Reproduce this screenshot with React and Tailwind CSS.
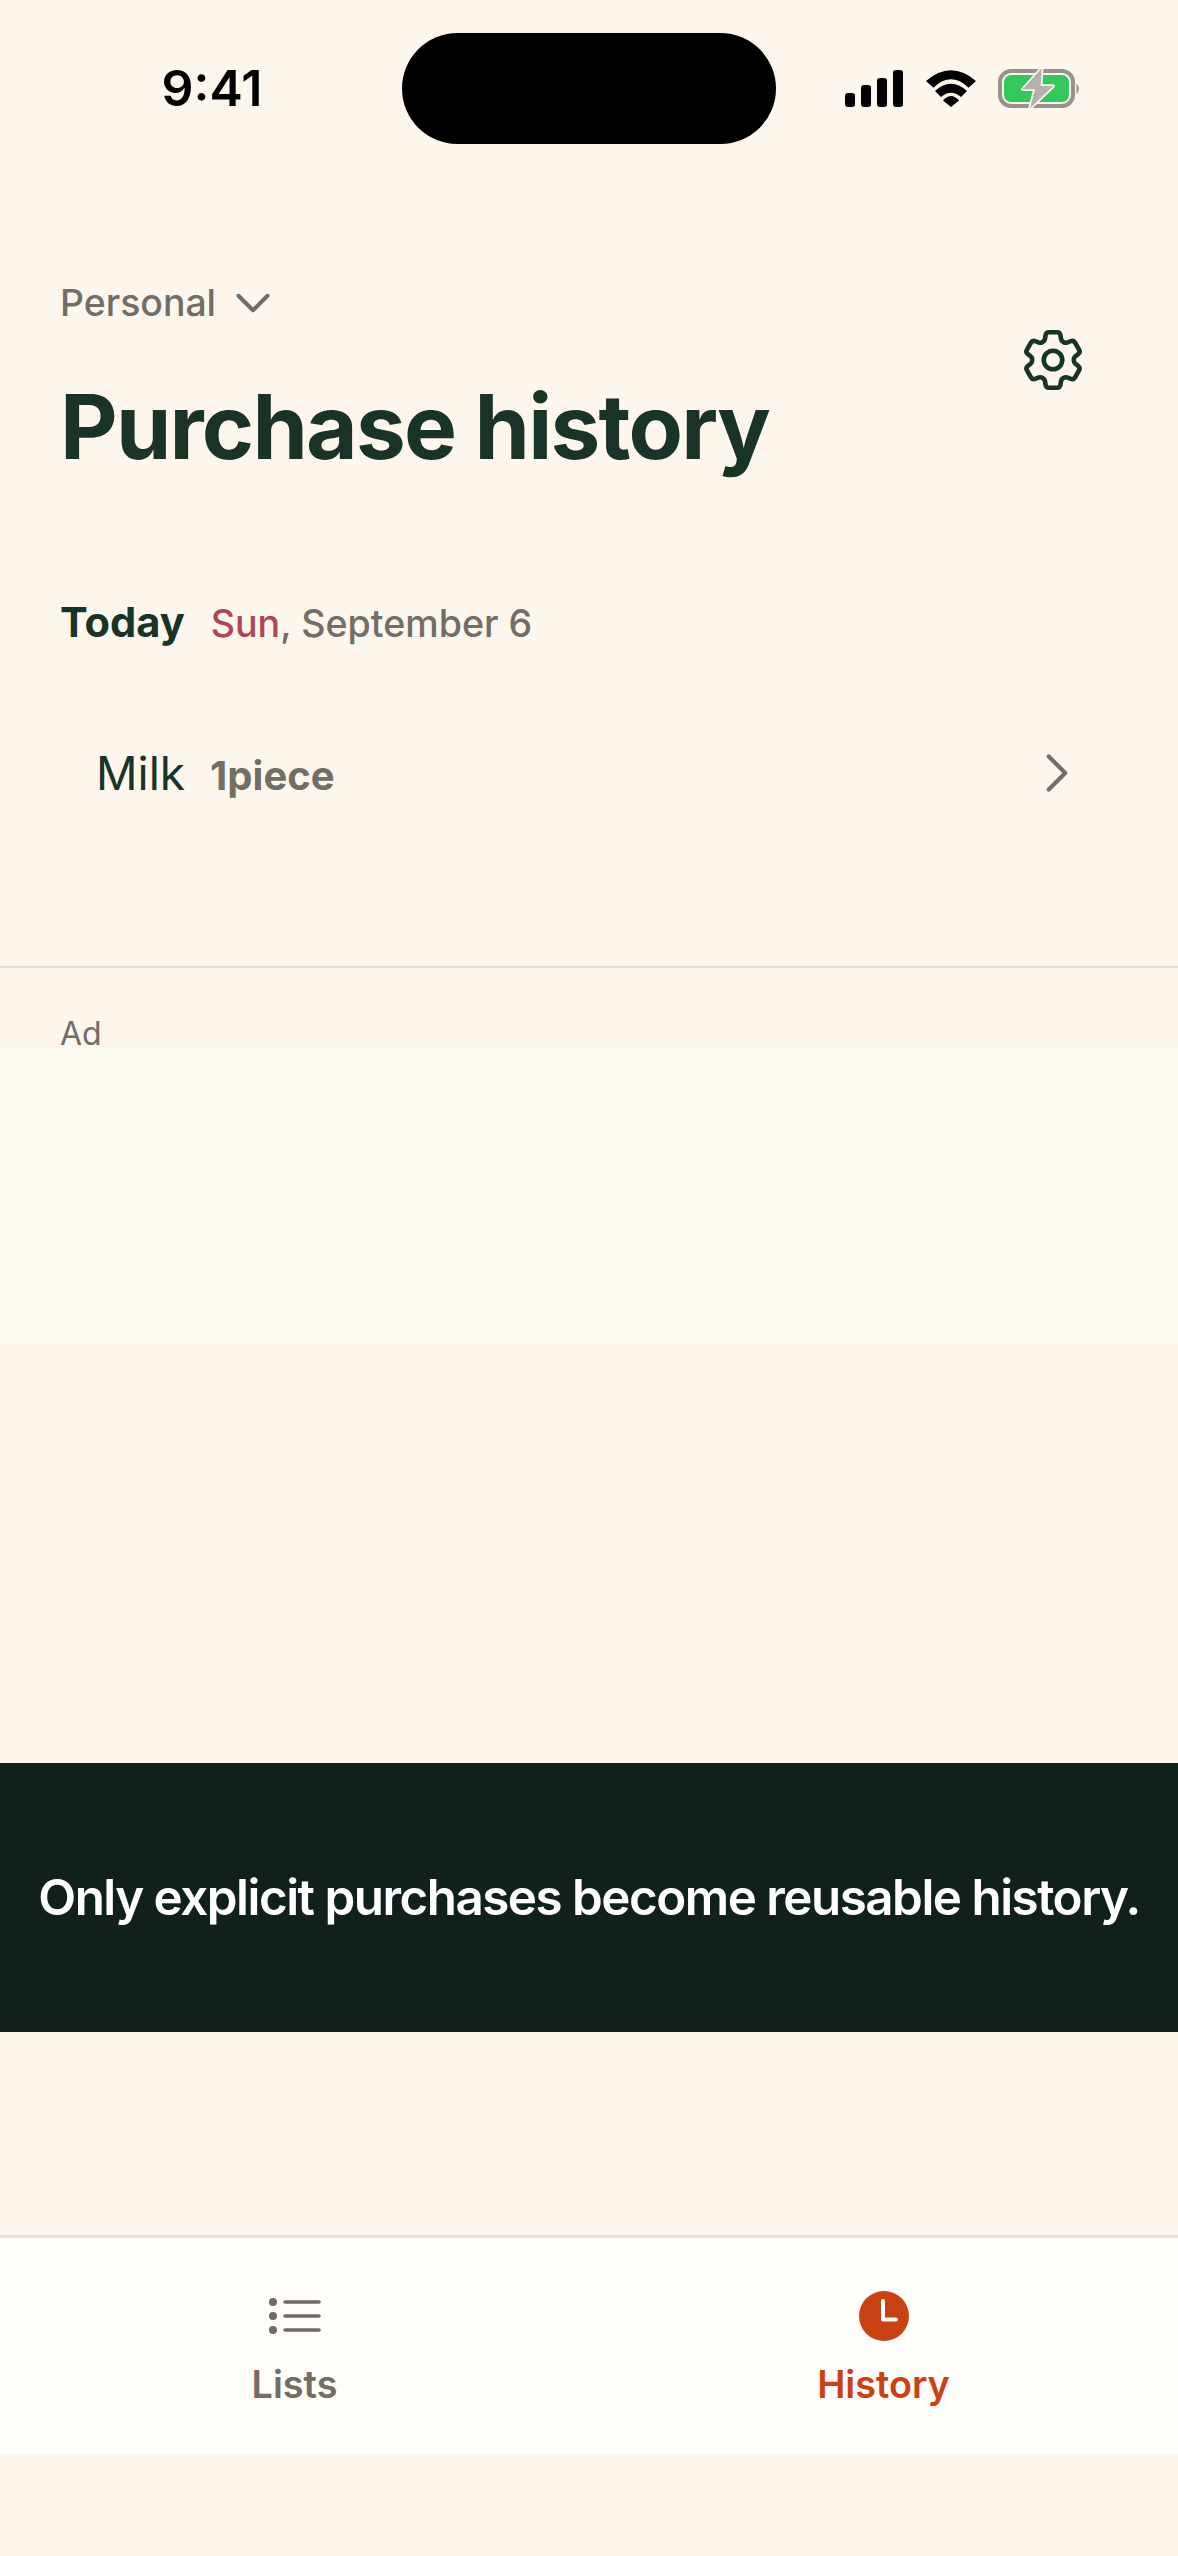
import React from 'react';
import { ChevronDown, ChevronRight } from 'lucide-react';
import { HiOutlineCog6Tooth } from 'react-icons/hi2';

const StatusIcons = () => (
  <svg width="240" height="40" viewBox="0 0 240 40" className="shrink-0 overflow-visible">
    {/* signal */}
    <rect x="0" y="24" width="10" height="14" rx="3" fill="#000" />
    <rect x="16" y="16" width="10" height="22" rx="3" fill="#000" />
    <rect x="32" y="9" width="10" height="29" rx="3" fill="#000" />
    <rect x="48" y="1" width="10" height="37" rx="3" fill="#000" />
    {/* wifi */}
    <path d="M81 12 Q106 -9.4 131 12 L123.5 18.7 Q106 1.9 88.5 18.7 Z" fill="#000" />
    <path d="M90 22 Q106 7.4 122 22 L116 28 Q106 19.4 96 28 Z" fill="#000" />
    <path d="M106 38 L98 31.5 Q106 22.5 114 31.5 Z" fill="#000" />
    {/* battery */}
    <rect x="155" y="2" width="73" height="35" rx="11" fill="none" stroke="#97938c" strokeWidth="4" />
    <rect x="159" y="6" width="65" height="27" rx="7" fill="#34c759" />
    <path d="M231.5 14 Q236 19.5 231.5 25.5 Z" fill="#97938c" />
    <path d="M196.7 -0.7 L177.7 20.3 H190 L185 39.3 L208.3 17 H195.7 Z" fill="#b5b1aa" stroke="#fdf6ed" strokeWidth="3.5" strokeLinejoin="round" paintOrder="stroke" />
  </svg>
);

const ListsIcon = () => (
  <svg width="52" height="36" viewBox="0 0 52 36">
    <circle cx="4" cy="4" r="4" fill="#6f6a63" />
    <circle cx="4" cy="18" r="4" fill="#6f6a63" />
    <circle cx="4" cy="32" r="4" fill="#6f6a63" />
    <path d="M16 4H50M16 18H50M16 32H50" stroke="#6f6a63" strokeWidth="3.5" strokeLinecap="round" />
  </svg>
);

const HistoryIcon = () => (
  <svg width="52" height="52" viewBox="0 0 52 52">
    <circle cx="26" cy="26" r="25" fill="#c84213" />
    <path d="M25 11V29.5H38" fill="none" stroke="#fff" strokeWidth="4" strokeLinecap="round" strokeLinejoin="round" />
  </svg>
);

const App = () => {
  return (
    <div className="w-[1178px] h-[2556px] flex flex-col bg-[#fdf6ed] font-['Inter',sans-serif] overflow-hidden">
      {/* Status bar */}
      <div className="h-[144px] pt-[33px] flex items-start shrink-0">
        <div className="w-[402px] h-[111px] flex items-center justify-center pl-[22px] text-[50px] font-semibold text-black">9:41</div>
        <div className="w-[374px] h-[111px] rounded-[56px] bg-black" />
        <div className="h-[111px] flex items-center pl-[69px]">
          <StatusIcons />
        </div>
      </div>

      {/* Header */}
      <div className="px-[60px] pt-[136px] relative h-[383px] shrink-0">
        <div className="h-[46px] flex items-center gap-[8px] text-[37.4px] font-medium text-[#726d65]">
          Personal
          <ChevronDown size={58} strokeWidth={1.65} />
        </div>
        <h1 className="mt-[51px] text-[89px] leading-[100px] font-bold text-[#193326] tracking-[-0.02em]">Purchase history</h1>
        <HiOutlineCog6Tooth size={74} className="absolute right-[88px] top-[179px] text-[#193326]" />
      </div>

      {/* Day */}
      <div className="px-[60px] pt-[70px] flex items-baseline gap-[26px] shrink-0">
        <span className="text-[41.6px] leading-[50px] font-bold text-[#193326]">Today</span>
        <span className="text-[37.6px] leading-[50px] font-medium text-[#726d65]">
          <span className="text-[#ad4656]">Sun</span>, September 6
        </span>
      </div>

      {/* Item */}
      <div className="pl-[96px] pr-[88px] pt-[91px] h-[157px] flex items-center shrink-0">
        <div className="flex items-baseline gap-[25px] pt-[2px]">
          <span className="text-[46px] leading-[56px] text-[#193326]">Milk</span>
          <span className="text-[40px] leading-[56px] font-bold text-[#726d65]">1piece</span>
        </div>
        <ChevronRight size={66} strokeWidth={1.5} className="ml-auto text-[#726d65]" />
      </div>

      <div className="mt-[160px] h-[2px] bg-[#e6dfd6] shrink-0" />

      {/* Ad */}
      <div className="px-[60px] pt-[52px] text-[32px] leading-[28px] text-[#726d65] shrink-0">Ad</div>
      <div className="h-[294px] bg-[#fcf9f1] shrink-0" />

      <div className="h-[421px] shrink-0" />

      {/* Message */}
      <div className="h-[269px] bg-[#0f211a] flex items-center justify-center text-[49.3px] font-semibold text-white tracking-[-0.03em] shrink-0">
        Only explicit purchases become reusable history.
      </div>

      <div className="h-[203px] shrink-0" />

      {/* Tabs */}
      <div className="h-[219px] border-t-[3px] border-[#e6dfd6] bg-[#fffdfa] grid grid-cols-2 shrink-0">
        <div className="flex flex-col items-center pt-[52px]">
          <div className="h-[52px] flex items-center"><ListsIcon /></div>
          <span className="mt-[20px] text-[37.8px] leading-[44px] font-semibold text-[#726d65]">Lists</span>
        </div>
        <div className="flex flex-col items-center pt-[52px]">
          <HistoryIcon />
          <span className="mt-[20px] text-[37.8px] leading-[44px] font-semibold text-[#c84213]">History</span>
        </div>
      </div>
    </div>
  );
};

export default App;
